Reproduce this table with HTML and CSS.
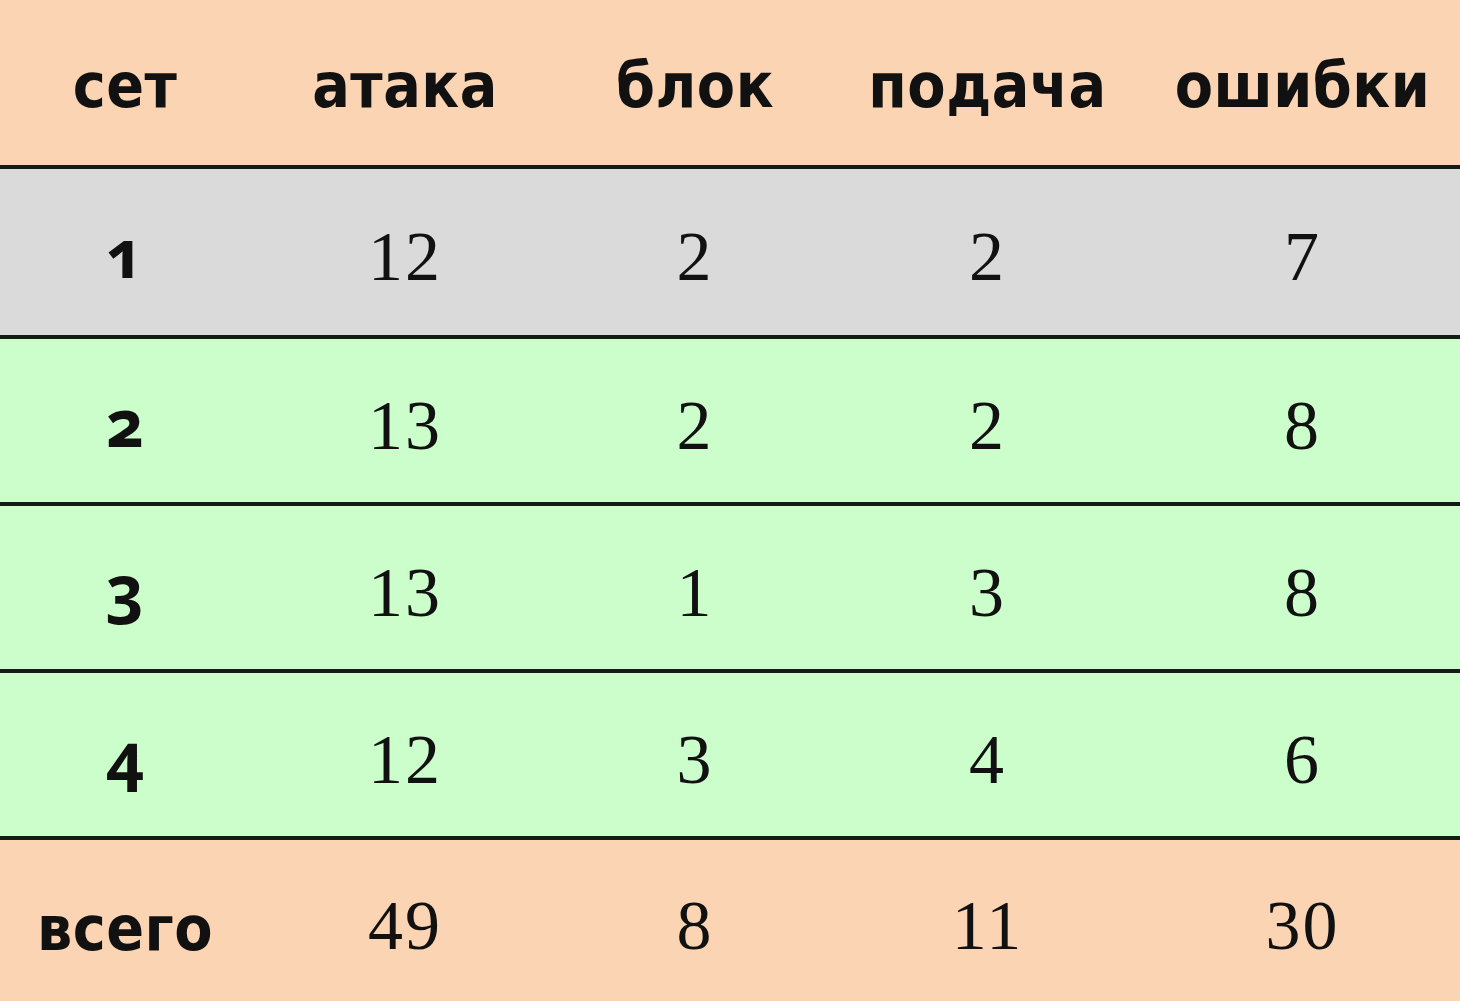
FILE: index.html
```html
<!DOCTYPE html>
<html lang="ru">
<head>
<meta charset="utf-8">
<title>Статистика по сетам</title>
<link rel="stylesheet" href="styles.css">
</head>
<body>
<table class="stats">
  <colgroup>
    <col class="c-set">
    <col class="c-att">
    <col class="c-blk">
    <col class="c-srv">
    <col class="c-err">
  </colgroup>
  <thead>
    <tr class="row-head">
      <th>сет</th><th>атака</th><th>блок</th><th>подача</th><th>ошибки</th>
    </tr>
  </thead>
  <tbody>
    <tr class="row-gray">
      <th class="set">1</th><td>12</td><td>2</td><td>2</td><td>7</td>
    </tr>
    <tr class="row-green">
      <th class="set">2</th><td>13</td><td>2</td><td>2</td><td>8</td>
    </tr>
    <tr class="row-green">
      <th class="set">3</th><td>13</td><td>1</td><td>3</td><td>8</td>
    </tr>
    <tr class="row-green">
      <th class="set">4</th><td>12</td><td>3</td><td>4</td><td>6</td>
    </tr>
  </tbody>
  <tfoot>
    <tr class="row-total">
      <th class="total">всего</th><td>49</td><td>8</td><td>11</td><td>30</td>
    </tr>
  </tfoot>
</table>
</body>
</html>
```

FILE: styles.css
```css
html, body {
  margin: 0;
  padding: 0;
  background: #fbd4b4;
}

.stats {
  width: 1460px;
  border-collapse: collapse;
  table-layout: fixed;
  color: #111;
}

.c-set { width: 250px; }
.c-att { width: 310px; }
.c-blk { width: 270px; }
.c-srv { width: 315px; }
.c-err { width: 315px; }

.stats th,
.stats td {
  padding: 0;
  text-align: center;
  vertical-align: middle;
}

.row-head { height: 167px; }
.row-gray { height: 170px; }
.row-green { height: 167px; }
.row-total { height: 163px; }

.row-head,
.row-gray,
.row-green {
  border-bottom: 4px solid #141a14;
}

.stats .row-head th {
  padding-top: 6px;
}

.row-head,
.row-total {
  background: #fbd4b4;
}

.row-gray {
  background: #dadada;
}

.row-green {
  background: #ccfecb;
}

.stats .row-head th,
.stats .total {
  font-family: "DejaVu Sans Condensed", "DejaVu Sans", sans-serif;
  font-weight: bold;
  font-size: 62px;
  letter-spacing: 0.5px;
}

.stats .total {
  padding-top: 16px;
}

.stats .set {
  font-family: "Open Sans", "DejaVu Sans", sans-serif;
  font-weight: 700;
  font-size: 66px;
  font-variant-numeric: oldstyle-nums;
}

.stats td {
  font-family: "Liberation Serif", serif;
  font-size: 70px;
  font-weight: normal;
  letter-spacing: 2px;
  padding-top: 10px;
}
```
